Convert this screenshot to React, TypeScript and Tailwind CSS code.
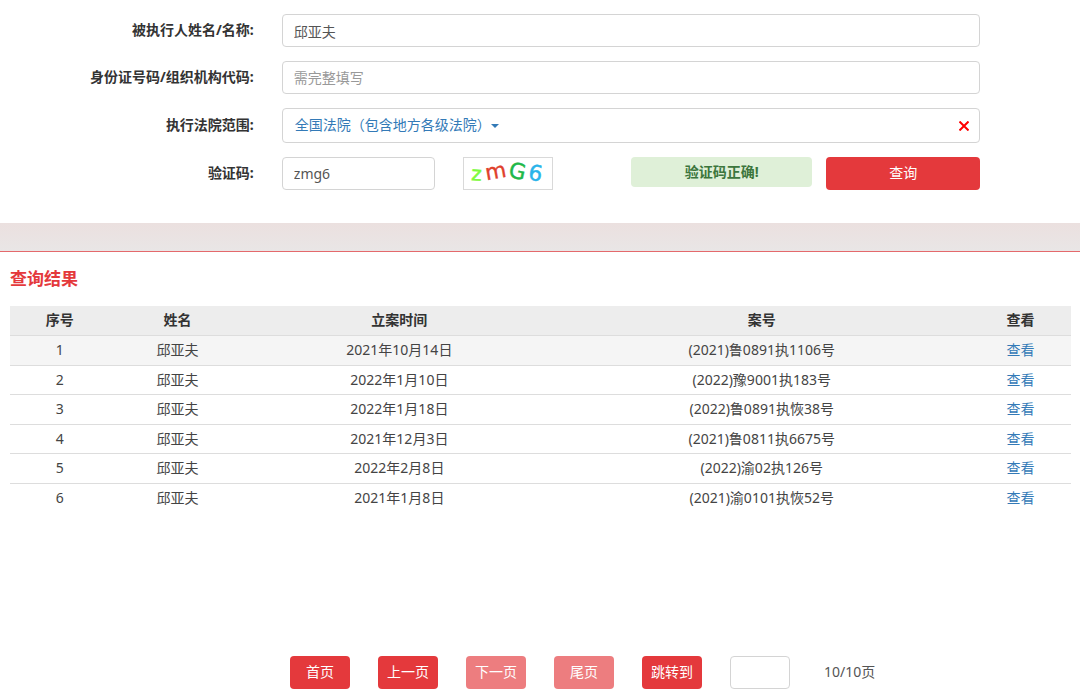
import React, { useState } from 'react';

const records = [
  { id: 1, name: '邱亚夫', date: '2021年10月14日', caseNo: '(2021)鲁0891执1106号' },
  { id: 2, name: '邱亚夫', date: '2022年1月10日', caseNo: '(2022)豫9001执183号' },
  { id: 3, name: '邱亚夫', date: '2022年1月18日', caseNo: '(2022)鲁0891执恢38号' },
  { id: 4, name: '邱亚夫', date: '2021年12月3日', caseNo: '(2021)鲁0811执6675号' },
  { id: 5, name: '邱亚夫', date: '2022年2月8日', caseNo: '(2022)渝02执126号' },
  { id: 6, name: '邱亚夫', date: '2021年1月8日', caseNo: '(2021)渝0101执恢52号' },
];

const labelClass = 'w-[25.9%] shrink-0 pb-[2px] text-right font-bold text-[#333]';
const inputClass =
  'h-[33px] rounded border border-[#d4d4d4] bg-white px-[11px] text-[#555] placeholder:text-[#999] outline-none focus:border-[#66afe9]';
const pageButtonClass = 'h-[33px] w-[60px] rounded bg-[#e4393c] pb-[2px] text-white disabled:opacity-65';

function Captcha() {
  return (
    <svg
      viewBox="0 0 90 33"
      role="img"
      aria-label="验证码图片"
      className="h-[33px] w-[90px] shrink-0 border border-[#d9d9d9]"
      fontFamily="'DejaVu Sans', sans-serif"
    >
      <text x="6" y="24" fontSize="21" fill="#7dfa3c" stroke="#7dfa3c" strokeWidth="0.6" transform="rotate(3 12 18)">z</text>
      <text x="21" y="22" fontSize="23" fill="#e0402c" stroke="#e0402c" strokeWidth="0.4" transform="rotate(-10 32 16)">m</text>
      <text x="46" y="22" fontSize="23" fill="#1fb84a" stroke="#1fb84a" strokeWidth="0.5" transform="rotate(12 55 15)">G</text>
      <text x="67" y="24" fontSize="23" fill="#2ab4ea" stroke="#2ab4ea" strokeWidth="0.5" transform="rotate(10 74 16)">6</text>
    </svg>
  );
}

function SearchForm() {
  const [name, setName] = useState('邱亚夫');
  const [idNumber, setIdNumber] = useState('');
  const [code, setCode] = useState('zmg6');

  return (
    <form
      onSubmit={(e) => e.preventDefault()}
      className="flex flex-col gap-[14px] pt-[14px] pr-[100px] pb-[33px]"
    >
      <div className="flex items-center gap-7">
        <label htmlFor="name" className={labelClass}>被执行人姓名/名称:</label>
        <input
          id="name"
          value={name}
          onChange={(e) => setName(e.target.value)}
          className={`${inputClass} min-w-0 flex-1`}
        />
      </div>

      <div className="flex items-center gap-7">
        <label htmlFor="idNumber" className={labelClass}>身份证号码/组织机构代码:</label>
        <input
          id="idNumber"
          value={idNumber}
          placeholder="需完整填写"
          onChange={(e) => setIdNumber(e.target.value)}
          className={`${inputClass} min-w-0 flex-1`}
        />
      </div>

      <div className="flex items-center gap-7">
        <label htmlFor="court" className={labelClass}>执行法院范围:</label>
        <div className="flex h-[35px] min-w-0 flex-1 items-center rounded border border-[#d4d4d4] pr-[9px] pl-3">
          <select id="court" className="appearance-none bg-transparent pb-[2px] text-[#337ab7] outline-none">
            <option>全国法院（包含地方各级法院）</option>
          </select>
          <svg viewBox="0 0 8 4" className="h-1 w-2" fill="#337ab7">
            <path d="M0 0h8L4 4z" />
          </svg>
          <button type="button" aria-label="清除" className="ml-auto flex h-5 w-3 items-center justify-center">
            <svg viewBox="0 0 10 10" className="h-[10px] w-[10px]" stroke="#f00" strokeWidth="2">
              <path d="M0.5 0.5l9 9M9.5 0.5l-9 9" />
            </svg>
          </button>
        </div>
      </div>

      <div className="flex items-center gap-7">
        <label htmlFor="code" className={labelClass}>验证码:</label>
        <div className="flex min-w-0 flex-1 items-start">
          <input
            id="code"
            value={code}
            onChange={(e) => setCode(e.target.value)}
            className={`${inputClass} mr-7 w-[22%]`}
          />
          <Captcha />
          <div className="ml-auto h-[30px] w-[26%] rounded bg-[#dff0d8] text-center leading-[30px] font-bold text-[#3c763d]">
            验证码正确!
          </div>
          <button type="submit" className="ml-[14px] h-[33px] w-[22%] rounded bg-[#e4393c] pb-[2px] text-white">
            查询
          </button>
        </div>
      </div>
    </form>
  );
}

function ResultTable() {
  return (
    <table className="w-full table-fixed border-collapse text-center text-[#444]">
      <thead>
        <tr className="h-[29px] border-b border-[#ddd] bg-[#ededed] text-[#333]">
          <th className="w-[9.4%]">序号</th>
          <th className="w-[12.8%]">姓名</th>
          <th className="w-[29%]">立案时间</th>
          <th className="w-[39.3%]">案号</th>
          <th>查看</th>
        </tr>
      </thead>
      <tbody>
        {records.map((record) => (
          <tr
            key={record.id}
            className="h-[30px] border-b border-[#ddd] first:bg-[#f5f5f5] last:border-b-0 even:h-[29px]"
          >
            <td>{record.id}</td>
            <td>{record.name}</td>
            <td>{record.date}</td>
            <td>{record.caseNo}</td>
            <td>
              <a href="#" className="text-[#337ab7]">查看</a>
            </td>
          </tr>
        ))}
      </tbody>
    </table>
  );
}

function Pagination() {
  const [page, setPage] = useState('');

  return (
    <nav className="flex items-center gap-7 pb-[6px] pl-[280px]">
      <button className={pageButtonClass}>首页</button>
      <button className={pageButtonClass}>上一页</button>
      <button className={pageButtonClass} disabled>下一页</button>
      <button className={pageButtonClass} disabled>尾页</button>
      <button className={pageButtonClass}>跳转到</button>
      <input
        aria-label="页码"
        value={page}
        onChange={(e) => setPage(e.target.value)}
        className={`${inputClass} w-[60px]`}
      />
      <span className="ml-[6px] pb-[2px] text-[#555]">10/10页</span>
    </nav>
  );
}

export default function App() {
  return (
    <div className="bg-white font-['Noto_Sans','Noto_Sans_CJK_SC',sans-serif] text-[14px] leading-5">
      <SearchForm />

      {/* Divider band */}
      <div className="h-7 bg-linear-to-b from-[#ebe0df] to-[#e9e6e6]" />

      <section className="border-t border-[#e4696c] pr-[9px] pl-[10px]">
        <h2 className="pt-[15px] pb-[15px] text-[17px] leading-6 font-bold text-[#e4393c]">查询结果</h2>
        <div className="min-h-[350px]">
          <ResultTable />
        </div>
        <Pagination />
      </section>
    </div>
  );
}
